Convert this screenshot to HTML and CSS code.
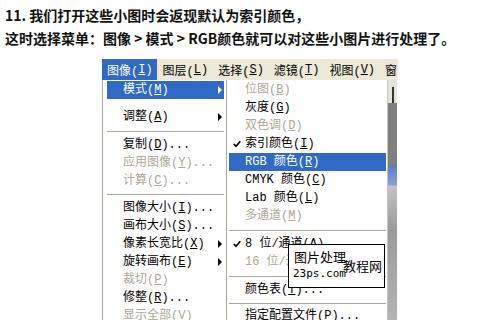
FILE: index.html
```html
<!DOCTYPE html>
<html>
<head>
<meta charset="utf-8">
<link rel="stylesheet" href="styles.css">
</head>
<body>
<div class="intro">
  <p>11. 我们打开这些小图时会返现默认为索引颜色，</p>
  <p>这时选择菜单：图像 &gt; 模式 &gt; RGB颜色就可以对这些小图片进行处理了。</p>
</div>
<div class="shot">
  <div class="menubar">
    <span class="mb active">图像(<u>I</u>)</span>
    <span class="mb">图层(<u>L</u>)</span>
    <span class="mb">选择(<u>S</u>)</span>
    <span class="mb">滤镜(<u>T</u>)</span>
    <span class="mb">视图(<u>V</u>)</span>
    <span class="mb">窗口</span>
  </div>
  <div class="menus">
    <div class="menu main">
      <div class="item hl">模式(<u>M</u>)<svg class="arrow" width="4" height="8" viewBox="0 0 4 8"><polygon points="0,0 4,4 0,8"/></svg></div>
      <div class="gap"></div>
      <div class="item">调整(<u>A</u>)<svg class="arrow" width="4" height="8" viewBox="0 0 4 8"><polygon points="0,0 4,4 0,8"/></svg></div>
      <div class="sep"></div>
      <div class="item">复制(<u>D</u>)...</div>
      <div class="item dis">应用图像(<u>Y</u>)...</div>
      <div class="item dis">计算(<u>C</u>)...</div>
      <div class="sep s9"></div>
      <div class="item">图像大小(<u>I</u>)...</div>
      <div class="item">画布大小(<u>S</u>)...</div>
      <div class="item">像素长宽比(<u>X</u>)<svg class="arrow" width="4" height="8" viewBox="0 0 4 8"><polygon points="0,0 4,4 0,8"/></svg></div>
      <div class="item">旋转画布(<u>E</u>)<svg class="arrow" width="4" height="8" viewBox="0 0 4 8"><polygon points="0,0 4,4 0,8"/></svg></div>
      <div class="item dis">裁切(<u>P</u>)</div>
      <div class="item">修整(<u>R</u>)...</div>
      <div class="item dis">显示全部(<u>V</u>)</div>
    </div>
    <div class="menu sub">
      <div class="item dis">位图(<u>B</u>)</div>
      <div class="item">灰度(<u>G</u>)</div>
      <div class="item dis">双色调(<u>D</u>)</div>
      <div class="item"><svg class="check" width="8" height="8" viewBox="0 0 8 8"><path d="M0.8 4 L3 6.3 L7.3 1.2"/></svg>索引颜色(<u>I</u>)</div>
      <div class="item hl">RGB 颜色(<u>R</u>)</div>
      <div class="item">CMYK 颜色(<u>C</u>)</div>
      <div class="item">Lab 颜色(<u>L</u>)</div>
      <div class="item dis">多通道(<u>M</u>)</div>
      <div class="sep"></div>
      <div class="item"><svg class="check" width="8" height="8" viewBox="0 0 8 8"><path d="M0.8 4 L3 6.3 L7.3 1.2"/></svg>8 位/通道(<u>A</u>)</div>
      <div class="item dis">16 位/通道(<u>6</u>)</div>
      <div class="sep"></div>
      <div class="item">颜色表(<u>T</u>)...</div>
      <div class="sep s8"></div>
      <div class="item">指定配置文件(<u>P</u>)...</div>
    </div>
    <div class="strip"></div>
    <div class="wm">
      <span class="wm1">图片处理</span>
      <span class="wm2">23ps.com</span>
      <span class="wm3">教程网</span>
    </div>
  </div>
</div>
</body>
</html>
```

FILE: styles.css
```css
html, body {
  margin: 0;
  padding: 0;
  background: #fff;
  overflow: hidden;
  width: 500px;
  height: 320px;
}
.intro {
  padding: 4px 0 0 5px;
  font-family: "Noto Sans CJK SC", sans-serif;
  font-weight: bold;
  font-size: 14px;
  line-height: 23px;
  color: #111;
}
.intro p {
  margin: 0;
  white-space: nowrap;
}
.shot {
  margin: 9px 0 0 102px;
  width: 296px;
  font-family: "Liberation Mono", "Noto Sans CJK SC", monospace;
  font-size: 12px;
  color: #000;
}
.menubar {
  display: flex;
  height: 21px;
  background: #ece9d8;
  overflow: hidden;
  white-space: nowrap;
}
.mb {
  display: flex;
  align-items: center;
  padding: 0 4px 0 5px;
  margin-right: 1px;
}
.mb.active {
  background: #316ac5;
  color: #fff;
}
.menus {
  position: relative;
  display: flex;
  height: 240px;
}
.menu {
  background: #fff;
  border-left: 1px solid #aca899;
  padding-top: 1px;
  box-sizing: border-box;
  white-space: nowrap;
}
.main {
  width: 124px;
  padding-left: 4px;
  padding-right: 2px;
}
.sub {
  width: 162px;
  padding-left: 2px;
  padding-right: 1px;
  border-right: 1px solid #c8c6bc;
}
.item {
  position: relative;
  height: 18px;
  line-height: 18px;
  padding-left: 16px;
}
.item u {
  text-decoration: underline;
}
.item.hl {
  background: #316ac5;
  color: #fff;
}
.item.dis {
  color: #aca899;
  text-shadow: 1px 1px 0 #fff;
}
.arrow {
  position: absolute;
  right: 2px;
  top: 5px;
  fill: #000;
}
.hl .arrow {
  fill: #fff;
}
.check {
  position: absolute;
  left: 4px;
  top: 5px;
  fill: none;
  stroke: #000;
  stroke-width: 1.7;
}
.gap {
  height: 9px;
}
.sep {
  height: 10px;
  display: flex;
  align-items: center;
}
.sep::before {
  content: "";
  flex: 1;
  height: 1px;
  background: #aca899;
}
.sep.s9 { height: 9px; }
.sep.s8 { height: 8px; }
.strip {
  width: 9px;
  background: linear-gradient(to bottom,
    #e4e3dc 0, #e4e3dc 23px,
    #7f7f7f 23px, #7f7f7f 85px,
    #5d79c6 85px, #8aa0d8 105px,
    #c4c4c4 106px, #9a9a9a 150px,
    #a8a8a8 200px, #b4b4b4 240px);
  position: relative;
}
.strip::before {
  content: "";
  position: absolute;
  left: 4px;
  top: 7px;
  width: 2px;
  height: 16px;
  background: #333;
}
.wm {
  position: absolute;
  left: 186px;
  top: 164px;
  width: 95px;
  height: 42px;
  border: 1px solid #000;
  background: #fff;
  font-family: "Noto Sans CJK SC", sans-serif;
  font-size: 13px;
  color: #000;
}
.wm1 {
  position: absolute;
  left: 5px;
  top: 4px;
  line-height: 16px;
}
.wm2 {
  position: absolute;
  left: 4px;
  top: 21px;
  font-family: "DejaVu Sans Mono", monospace;
  font-size: 11px;
  line-height: 16px;
}
.wm3 {
  position: absolute;
  left: 54px;
  top: 12px;
  line-height: 18px;
  font-size: 13px;
}
```
